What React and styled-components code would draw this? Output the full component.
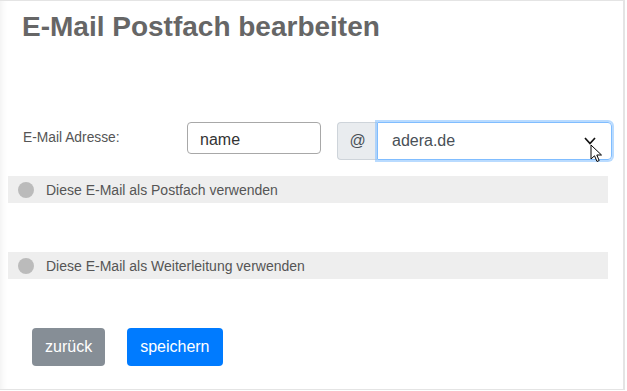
import styled, { createGlobalStyle } from "styled-components";

const GlobalStyle = createGlobalStyle`
  body {
    margin: 0;
    background: #ffffff;
    font-family: "Liberation Sans", Arial, sans-serif;
  }
`;

const Frame = styled.div`
  width: 625px;
  height: 390px;
  box-sizing: border-box;
  border: 1px solid #e4e4e4;
  border-left: none;
  border-right-width: 2px;
  box-shadow: inset 7px 0 6px -5px rgba(0, 0, 0, 0.06);
  padding-left: 8px;
  position: relative;
`;

const Title = styled.h1`
  margin: 0;
  padding: 10px 0 0 14px;
  font-size: 28px;
  line-height: 32px;
  font-weight: bold;
  color: #666666;
`;

const FormRow = styled.div`
  display: flex;
  align-items: flex-start;
  margin-top: 79px;
`;

const Label = styled.div`
  width: 164px;
  margin-left: 15px;
  padding-top: 8px;
  font-size: 13.8px;
  color: #555555;
`;

const TextInput = styled.div`
  width: 134px;
  height: 32px;
  box-sizing: border-box;
  border: 1px solid #a8a8a8;
  border-radius: 4px;
  padding: 3px 0 0 12px;
  display: flex;
  align-items: center;
  font-size: 16px;
  color: #333333;
`;

const Group = styled.div`
  display: flex;
  margin-left: 16px;
`;

const Addon = styled.div`
  width: 40px;
  height: 38px;
  box-sizing: border-box;
  background: #e9ecef;
  border: 1px solid #ced4da;
  border-right: none;
  border-radius: 4px 0 0 4px;
  display: flex;
  align-items: center;
  justify-content: center;
  font-size: 16px;
  color: #495057;
`;

const Select = styled.div`
  width: 235px;
  height: 38px;
  box-sizing: border-box;
  border: 1px solid #80bdff;
  border-radius: 0 4px 4px 0;
  box-shadow: 0 0 0 2px rgba(128, 189, 255, 0.55);
  padding: 0 15px 0 14px;
  display: flex;
  align-items: center;
  justify-content: space-between;
  font-size: 16px;
  color: #495057;
`;

const OptionRow = styled.div`
  width: 600px;
  height: 27px;
  background: #eeeeee;
  display: flex;
  align-items: center;
  margin-top: ${(p) => p.$gap}px;
  font-size: 14px;
  color: #555555;
`;

const Radio = styled.span`
  width: 16px;
  height: 16px;
  border-radius: 50%;
  background: #bbbbbb;
  margin: 0 12px 0 10px;
  flex: none;
`;

const Buttons = styled.div`
  display: flex;
  gap: 22px;
  margin: 49px 0 0 24px;
`;

const Button = styled.button`
  height: 38px;
  padding: 0 13px;
  border: none;
  border-radius: 4px;
  background: ${(p) => (p.$primary ? "#007bff" : "#868e96")};
  color: #ffffff;
  font-family: "Liberation Sans", Arial, sans-serif;
  font-size: 16px;
`;

const Cursor = styled.svg`
  position: absolute;
  left: 590px;
  top: 143px;
`;

function App() {
  return (
    <>
      <GlobalStyle />
      <Frame>
        <Title>E-Mail Postfach bearbeiten</Title>
        <FormRow>
          <Label>E-Mail Adresse:</Label>
          <TextInput>name</TextInput>
          <Group>
            <Addon>@</Addon>
            <Select>
              <span>adera.de</span>
              <svg width="12" height="8" viewBox="0 0 12 8">
                <path d="M1 1 L6 6.5 L11 1" fill="none" stroke="#111" strokeWidth="1.7" />
              </svg>
            </Select>
          </Group>
        </FormRow>
        <OptionRow $gap={16}>
          <Radio />
          Diese E-Mail als Postfach verwenden
        </OptionRow>
        <OptionRow $gap={49}>
          <Radio />
          Diese E-Mail als Weiterleitung verwenden
        </OptionRow>
        <Buttons>
          <Button>zurück</Button>
          <Button $primary>speichern</Button>
        </Buttons>
        <Cursor width="13" height="20" viewBox="0 0 13 20">
          <path
            d="M1 1 L1 15 L4.5 11.8 L7 17.5 L9.2 16.5 L6.8 11 L11.5 11 Z"
            fill="#fff"
            stroke="#000"
            strokeWidth="1"
            strokeLinejoin="round"
          />
        </Cursor>
      </Frame>
    </>
  );
}

export default App;
